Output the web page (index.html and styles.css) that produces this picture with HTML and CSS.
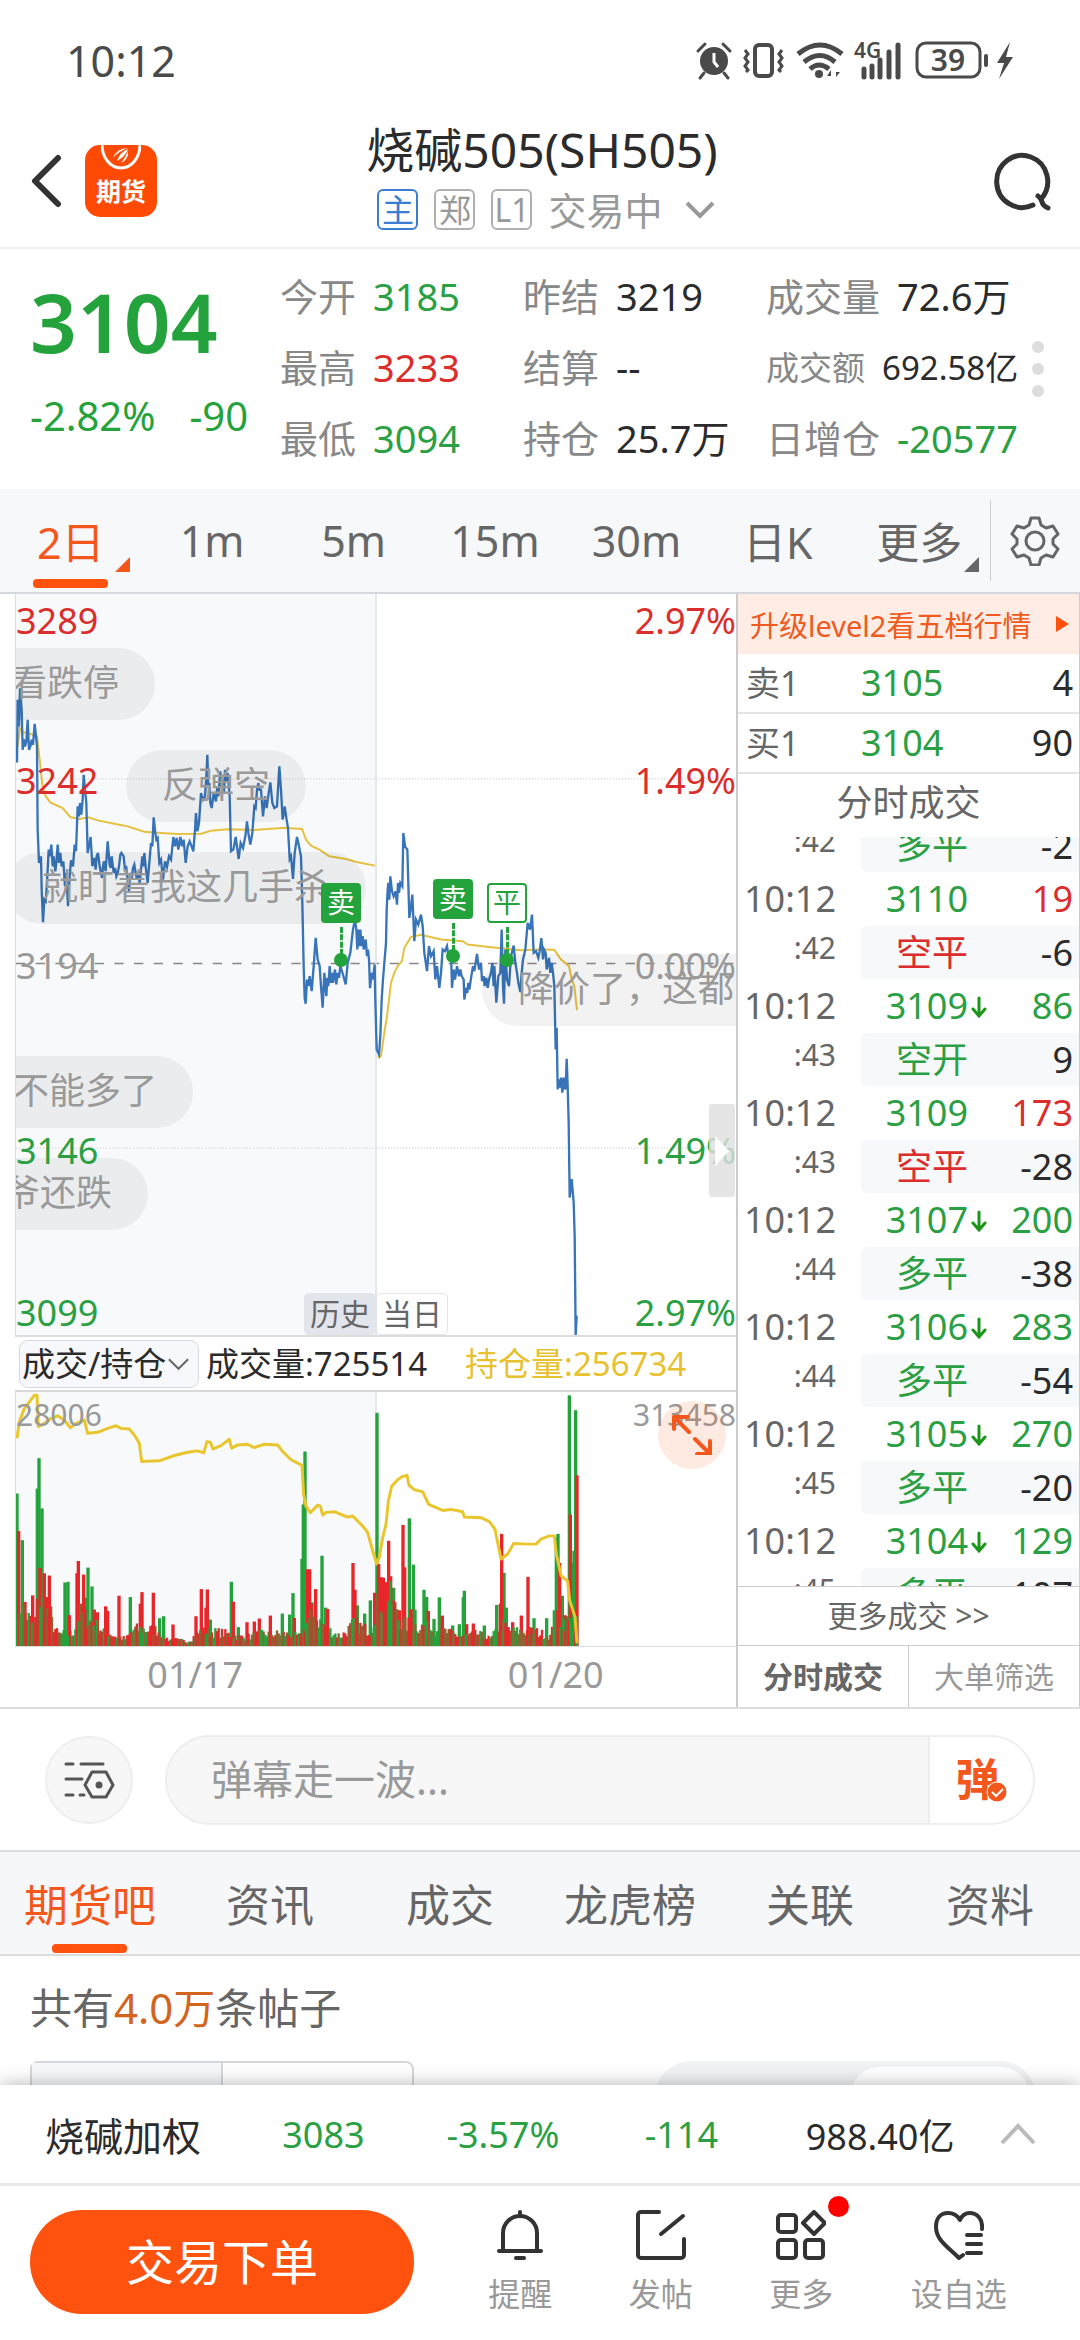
FILE: index.html
```html
<!DOCTYPE html>
<html lang="zh-CN">
<head>
  <meta charset="UTF-8" />
  <title>烧碱505(SH505)</title>
  <meta name="viewport" content="width=device-width, initial-scale=1" />
  <link rel="stylesheet" href="styles.css">
</head>
<body>
  <div class="app">
    <div class="status-bar">
      <span class="clock">10:12</span>
      <svg class="status-icons" viewBox="0 0 320 40" width="320" height="40" fill="none" stroke="#4a4a4a" stroke-width="3">
        <circle cx="18" cy="21" r="14" fill="#4a4a4a" stroke="none" />
        <path d="M2 11L9 4M34 11L27 4M8 33L4 38M28 33L32 38" stroke-linecap="round" />
        <path d="M18 13v9l4 5" stroke="#fff" />
        <rect x="59" y="5" width="17" height="31" rx="4" stroke-width="4" />
        <path d="M49 10l3 4-3 4 3 4-3 4 3 4-2 2M86 10l-3 4 3 4-3 4 3 4-3 4 2 2" />
        <path d="M102 14q22-18 44 0M108 22q16-13 31 0M114 29q9-8 19 0" stroke-width="5" />
        <circle cx="123" cy="34" r="4" fill="#4a4a4a" stroke="none" />
        <path d="M135 38v-8l-4 6h4M140 29v8l4-5h-4" fill="#4a4a4a" stroke="none" />
        <path d="M168 29v8M176 26v11M184 20v17M193 12v25M202 5v32" stroke-width="5" stroke-linecap="round" />
        <rect x="221" y="3" width="63" height="34" rx="9" />
        <path d="M290 16v9" stroke-width="4" stroke-linecap="round" />
        <path d="M314 2L301 23h7l-5 16 14-22h-7z" fill="#4a4a4a" stroke="none" />
        <text class="svg-4g" x="158" y="18">4G</text>
        <text class="svg-battery" x="252" y="31" text-anchor="middle">39</text>
      </svg>
    </div>

    <header class="header">
      <div class="header-left">
        <button class="icon-btn" aria-label="返回">
          <svg width="32" height="54" viewBox="0 0 32 54" fill="none" stroke="#333" stroke-width="6" stroke-linejoin="round" stroke-linecap="round"><path d="M28 4L5 27l23 23" /></svg>
        </button>
        <a class="logo" href="#">
          <svg width="40" height="27" viewBox="0 0 40 27" fill="none">
            <path d="M1 0a19 23 0 0 0 38 0" stroke="#fff" stroke-width="3" />
            <path d="M12 13Q16 3 27 3Q18 6 12 13ZM16 16Q19 7 27 4Q25 11 16 16ZM20 18Q24 13 27 6Q28 14 20 18Z" fill="#fff" />
          </svg>
          <span>期货</span>
        </a>
      </div>
      <div class="header-title">
        <h1>烧碱505(SH505)</h1>
        <div class="sub-title">
          <span class="badge badge-blue">主</span>
          <span class="badge">郑</span>
          <span class="badge">L1</span>
          <span>交易中</span>
          <svg class="sub-arrow" width="30" height="18" viewBox="0 0 30 18" fill="none" stroke="#999" stroke-width="4"><path d="M2 2l13 13L28 2" /></svg>
        </div>
      </div>
      <button class="icon-btn search" aria-label="搜索">
        <svg width="60" height="60" viewBox="0 0 60 60" fill="none" stroke="#333" stroke-width="5" stroke-linecap="round"><path d="M39 53A25.500 26 0 1 1 47 47" /><path d="M44 44q3 2 4 6 1 4 6 6" /></svg>
      </button>
    </header>

    <main class="content">
      <section class="quote">
        <div class="quote-main">
          <div class="price">3104</div>
          <div class="change"><span>-2.82%</span><span>-90</span></div>
        </div>
        <dl class="stats">
          <div><dt>今开</dt><dd class="green">3185</dd></div>
          <div><dt>昨结</dt><dd>3219</dd></div>
          <div><dt>成交量</dt><dd>72.6万</dd></div>
          <div><dt>最高</dt><dd class="red">3233</dd></div>
          <div><dt>结算</dt><dd>--</dd></div>
          <div class="stat-small"><dt>成交额</dt><dd>692.58亿</dd></div>
          <div><dt>最低</dt><dd class="green">3094</dd></div>
          <div><dt>持仓</dt><dd>25.7万</dd></div>
          <div><dt>日增仓</dt><dd class="green">-20577</dd></div>
        </dl>
        <div class="dots"><i></i><i></i><i></i></div>
      </section>

      <nav class="period">
        <button class="period-tab active has-more">2日</button>
        <button class="period-tab">1m</button>
        <button class="period-tab">5m</button>
        <button class="period-tab">15m</button>
        <button class="period-tab">30m</button>
        <button class="period-tab">日K</button>
        <button class="period-tab has-more">更多</button>
        <button class="gear" aria-label="设置">
          <svg width="50" height="50" viewBox="0 0 50 50" fill="none" stroke="#666" stroke-width="3" stroke-linejoin="round">
            <path d="M21 2h8l2 7 5 3 7-2 5 8-5 5v5l5 5-5 8-7-2-5 3-2 7h-8l-2-7-5-3-7 2-5-8 5-5v-5l-5-5 5-8 7 2 5-3z" />
            <circle cx="25" cy="25" r="9" />
          </svg>
        </button>
      </nav>

      <section class="market">
        <div class="charts">
          <div class="chart price-chart">
            <svg class="plot" viewBox="45 12 2160 2226" preserveAspectRatio="none" fill="none">
              <rect x="45" y="12" width="1079" height="2226" fill="#f7f9fb" />
              <path d="M45 567H2205M45 1677H2205" stroke="#ddd" stroke-width="4" stroke-dasharray="4 5" />
              <path d="M45 1122H2205" stroke="#888" stroke-width="5" stroke-dasharray="28 31" />
              <path d="M1125 12V2238" stroke="#e0e3e7" stroke-width="5" />
              <polyline class="avg-line" points="50,470 57,415 66,428 78,428 95,435 108,440 116,510 124,585 134,620 148,638 185,655 208,682 235,688 262,683 290,692 340,702 380,710 430,726 480,730 530,733 600,732 630,723 680,719 760,721 850,714 903,718 915,750 930,768 955,780 985,800 1030,807 1070,818 1122,828" />
              <polyline class="avg-line" points="1130,1405 1140,1400 1150,1330 1158,1280 1170,1180 1180,1150 1190,1130 1203,1115 1210,1075 1230,1042 1260,1036 1320,1050 1385,1055 1400,1065 1470,1073 1560,1082 1620,1080 1660,1081 1680,1110 1704,1130 1712,1170 1720,1190 1728,1262" />
              <polyline class="price-line" points="48,518 50,330 54,410 57,295 62,360 65,480 68,448 72,470 76,455 80,390 84,480 88,470 92,450 96,465 101,402 105,440 108,470 110,720 114,820 120,800 122,900 126,998 130,930 134,935 138,880 143,780 147,800 151,765 155,830 158,800 163,845 166,820 170,765 174,820 178,790 182,830 187,815 192,890 196,850 201,950 206,860 210,812 216,830 221,765 225,785 230,650 234,680 237,640 241,675 245,630 248,555 252,600 256,640 260,790 264,770 269,742 274,830 280,805 284,840 287,800 291,790 296,830 303,865 306,830 309,815 314,845 320,755 326,825 329,835 332,800 338,850 342,835 346,860 350,850 354,830 358,795 361,790 368,800 372,840 376,835 384,905 388,850 392,870 396,835 400,825 404,850 408,870 412,850 416,880 420,840 424,800 427,830 430,790 436,850 440,880 444,830 450,760 454,770 458,683 463,730 466,750 470,745 475,820 480,810 486,870 492,815 498,832 504,800 510,810 517,742 522,770 527,745 532,780 538,742 543,770 548,750 554,820 560,770 566,755 572,770 577,785 582,720 585,670 589,725 594,700 600,610 606,630 612,620 616,560 619,495 622,590 625,580 628,640 632,655 638,610 645,635 649,590 652,620 658,545 661,590 665,570 669,610 672,540 676,575 680,550 686,620 690,785 697,780 704,742 713,808 719,760 726,775 733,740 738,695 742,730 748,765 754,730 760,650 764,655 768,600 772,580 775,600 780,600 786,680 792,620 797,655 803,610 808,578 814,640 820,655 828,650 835,530 840,600 845,690 851,650 856,685 861,715 866,808 870,800 876,868 881,790 888,742 894,770 900,800 904,940 908,1130 911,1225 914,1243 918,1170 922,1190 926,1160 932,1205 938,1130 944,1045 950,1110 956,1130 960,1190 965,1255 970,1150 976,1220 979,1165 982,1190 986,1130 990,1180 993,1150 996,1180 1002,1140 1006,1185 1010,1150 1014,1165 1018,1130 1026,1155 1034,1185 1040,1120 1048,1090 1056,1020 1062,990 1066,1020 1069,1080 1072,1020 1075,1070 1078,1020 1082,1070 1085,1040 1088,1080 1094,1050 1098,1100 1101,1080 1104,1110 1107,1196 1112,1150 1116,1170 1121,1125 1123,1230 1127,1380 1134,1395 1138,1340 1142,1230 1146,1170 1150,1120 1155,1060 1157,960 1160,900 1162,880 1165,930 1168,860 1173,905 1178,920 1184,905 1188,945 1191,880 1194,910 1198,880 1204,890 1207,730 1212,770 1219,780 1225,985 1229,960 1234,915 1240,1055 1245,990 1252,1005 1260,975 1265,1010 1270,1090 1278,1145 1284,1070 1290,1100 1298,1085 1303,1170 1308,1130 1315,1195 1320,1150 1325,1080 1332,1085 1338,1070 1344,1110 1350,1090 1353,1195 1358,1140 1362,1170 1368,1130 1374,1160 1378,1140 1382,1160 1388,1170 1390,1230 1396,1195 1399,1210 1402,1180 1405,1200 1411,1160 1416,1130 1420,1145 1428,1093 1434,1140 1440,1120 1443,1175 1448,1160 1451,1190 1456,1165 1460,1195 1464,1170 1470,1150 1474,1120 1478,1190 1480,1130 1486,1240 1492,1160 1498,1150 1502,1020 1506,1190 1509,1243 1513,1080 1518,1170 1524,1190 1530,1100 1538,1068 1543,1120 1548,1150 1552,1180 1558,1208 1562,1150 1566,1110 1573,1080 1580,1000 1587,1020 1593,975 1598,1090 1605,1085 1612,1105 1616,1085 1621,1046 1626,1110 1629,1080 1634,1090 1637,1140 1644,1105 1648,1150 1652,1120 1656,1150 1660,1190 1664,1380 1667,1315 1670,1500 1674,1470 1677,1495 1680,1465 1684,1510 1688,1465 1692,1500 1694,1495 1697,1408 1700,1490 1703,1600 1706,1825 1712,1770 1718,1840 1721,1940 1724,2238 1727,2180" />
            </svg>
            <div class="bullets">
              <span class="bullet b1">看跌停</span>
              <span class="bullet b2">反弹空</span>
              <span class="bullet b3">就盯着我这几手杀</span>
              <span class="bullet b4">降价了，这都</span>
              <span class="bullet b5">不能多了</span>
              <span class="bullet b6">爷还跌</span>
            </div>
            <div class="scale">
              <div class="red"><span>3289</span><span>2.97%</span></div>
              <div class="red"><span>3242</span><span>1.49%</span></div>
              <div class="grey"><span>3194</span><span>0.00%</span></div>
              <div class="green"><span>3146</span><span>1.49%</span></div>
              <div class="green"><span>3099</span><span>2.97%</span></div>
            </div>
            <div class="marker m1"><b>卖</b><i></i><u></u></div>
            <div class="marker m2"><b>卖</b><i></i><u></u></div>
            <div class="marker outline m3"><b>平</b><i></i><u></u></div>
            <div class="days"><span>历史</span><span>当日</span></div>
            <button class="handle" aria-label="收起">
              <svg width="18" height="32" viewBox="0 0 18 32"><path d="M2 1l14 15L2 31z" fill="#fff" /></svg>
            </button>
          </div>

          <div class="volume-head">
            <label class="indicator">
              <select aria-label="指标"><option>成交/持仓</option></select>
              <svg width="24" height="14" viewBox="0 0 24 14" fill="none" stroke="#666" stroke-width="2"><path d="M2 2l10 10L22 2" /></svg>
            </label>
            <span class="vol">成交量:725514</span>
            <span class="yellow">持仓量:256734</span>
          </div>

          <div class="chart volume-chart">
            <svg class="plot" viewBox="45 60 2160 768" preserveAspectRatio="none" fill="none">
              <rect x="45" y="60" width="1079" height="768" fill="#f7f9fb" />
              <path d="M1125 60V828" stroke="#e0e3e7" stroke-width="5" />
              <g id="bars"></g>
              <polyline class="oi-line" points="48,200 55,150 70,110 85,90 100,70 108,70 112,165 130,155 150,140 170,132 190,145 208,168 225,155 250,145 260,185 290,182 320,170 345,162 360,170 385,172 400,190 415,215 422,270 475,268 520,252 560,242 590,238 608,244 618,210 628,212 636,232 660,222 685,203 692,230 710,220 740,218 760,228 790,218 830,220 845,240 870,265 903,282 908,370 915,405 928,425 950,402 958,405 965,432 975,424 1000,422 1040,438 1055,435 1085,465 1100,485 1115,540 1127,580 1135,560 1145,500 1155,460 1162,390 1172,345 1190,325 1205,315 1218,312 1224,342 1240,355 1265,362 1283,400 1325,418 1350,415 1385,422 1390,438 1440,440 1465,452 1482,475 1495,540 1500,565 1520,550 1538,518 1580,520 1605,520 1620,505 1645,495 1660,495 1666,550 1680,615 1700,632 1706,690 1722,740 1728,820" />
            </svg>
            <div class="scale volume-scale"><div class="grey"><span>28006</span><span>313458</span></div></div>
            <button class="expand" aria-label="全屏">
              <svg width="40" height="40" viewBox="0 0 40 40" fill="none" stroke="#f4571c" stroke-width="4" stroke-linecap="round" stroke-linejoin="round"><path d="M17 17L2 2M2 14V2h14M23 24l15 15M38 26v13H25" /></svg>
            </button>
          </div>
          <div class="dates"><span>01/17</span><span>01/20</span></div>
        </div>

        <aside class="book">
          <a class="upgrade" href="#">升级level2看五档行情
            <svg width="13" height="16" viewBox="0 0 13 16"><path d="M0 0l13 8L0 16z" fill="#ff520e" /></svg>
          </a>
          <table class="orders">
            <tr><td>卖1</td><td class="green">3105</td><td>4</td></tr>
            <tr><td>买1</td><td class="green">3104</td><td>90</td></tr>
          </table>
          <h2>分时成交</h2>
          <div class="ticks">
            <table>
              <tr class="sub"><td>:42</td><td class="green">多平</td><td>-2</td></tr>
              <tr><td>10:12</td><td class="green">3110</td><td class="red">19</td></tr>
              <tr class="sub"><td>:42</td><td class="red">空平</td><td>-6</td></tr>
              <tr><td>10:12</td><td class="green down">3109</td><td class="green">86</td></tr>
              <tr class="sub"><td>:43</td><td class="green">空开</td><td>9</td></tr>
              <tr><td>10:12</td><td class="green">3109</td><td class="red">173</td></tr>
              <tr class="sub"><td>:43</td><td class="red">空平</td><td>-28</td></tr>
              <tr><td>10:12</td><td class="green down">3107</td><td class="green">200</td></tr>
              <tr class="sub"><td>:44</td><td class="green">多平</td><td>-38</td></tr>
              <tr><td>10:12</td><td class="green down">3106</td><td class="green">283</td></tr>
              <tr class="sub"><td>:44</td><td class="green">多平</td><td>-54</td></tr>
              <tr><td>10:12</td><td class="green down">3105</td><td class="green">270</td></tr>
              <tr class="sub"><td>:45</td><td class="green">多平</td><td>-20</td></tr>
              <tr><td>10:12</td><td class="green down">3104</td><td class="green">129</td></tr>
              <tr class="sub"><td>:45</td><td class="green">多平</td><td>-107</td></tr>
            </table>
          </div>
          <a class="more-ticks" href="#">更多成交 &gt;&gt;</a>
          <div class="book-tabs">
            <button class="active">分时成交</button>
            <button>大单筛选</button>
          </div>
        </aside>
      </section>

      <section class="danmu">
        <button class="danmu-set" aria-label="弹幕设置">
          <svg width="52" height="40" viewBox="0 0 52 40" fill="none" stroke="#555" stroke-width="3" stroke-linecap="round" stroke-linejoin="round">
            <path d="M3 4h7M18 4h22M3 19h16M3 35h7M17 35h4" />
            <path d="M29 12h14l7 13-7 12H29l-7-12z" /><circle cx="36" cy="25" r="2" fill="#555" />
          </svg>
        </button>
        <div class="danmu-box">
          <input type="text" placeholder="弹幕走一波..." aria-label="弹幕">
          <button aria-label="弹幕开关">弹
            <svg width="22" height="22" viewBox="0 0 22 22"><circle cx="11" cy="11" r="10" fill="#f4571c" stroke="#fff" stroke-width="1" /><path d="M6 11l4 4 7-7" fill="none" stroke="#fff" stroke-width="2" /></svg>
          </button>
        </div>
      </section>

      <nav class="tabs">
        <button class="active">期货吧</button>
        <button>资讯</button>
        <button>成交</button>
        <button>龙虎榜</button>
        <button>关联</button>
        <button>资料</button>
      </nav>

      <section class="posts">
        <p>共有<em>4.0万</em>条帖子</p>
        <div class="filters">
          <div class="filter-box"><span></span><span></span></div>
          <div class="filter-pill"><span></span></div>
        </div>
      </section>
    </main>

    <footer class="footer">
      <div class="index-bar">
        <span class="index-name">烧碱加权</span>
        <span class="green">3083</span>
        <span class="green">-3.57%</span>
        <span class="green">-114</span>
        <span>988.40亿</span>
        <svg width="36" height="22" viewBox="0 0 36 22" fill="none" stroke="#bbb" stroke-width="4"><path d="M2 20L18 3l16 17" /></svg>
      </div>
      <div class="actions">
        <button class="trade">交易下单</button>
        <button class="action">
          <svg width="50" height="50" viewBox="0 0 50 50" fill="none" stroke="#333" stroke-width="4" stroke-linecap="round"><path d="M25 2v4M8 41V23a17 17 0 0 1 34 0v18M4 41h42M21 48h8" /></svg>
          <span>提醒</span>
        </button>
        <button class="action">
          <svg width="50" height="50" viewBox="0 0 50 50" fill="none" stroke="#333" stroke-width="4" stroke-linecap="round" stroke-linejoin="round"><path d="M23 2H5a3 3 0 0 0-3 3v40a3 3 0 0 0 3 3h40a3 3 0 0 0 3-3V29M25 24L47 6" /></svg>
          <span>发帖</span>
        </button>
        <button class="action">
          <svg width="50" height="50" viewBox="0 0 50 50" fill="none" stroke="#333" stroke-width="4" stroke-linejoin="round"><rect x="2" y="5" width="18" height="17" rx="3" /><rect x="2" y="30" width="18" height="18" rx="3" /><rect x="29" y="30" width="18" height="18" rx="3" /><path d="M38 2l11 11-11 11-11-11z" /></svg>
          <span>更多</span>
          <i class="red-dot"></i>
        </button>
        <button class="action wide">
          <svg width="50" height="50" viewBox="0 0 50 50" fill="none" stroke="#333" stroke-width="4" stroke-linecap="round" stroke-linejoin="round"><path d="M48 19C49 8 42 3 36 3Q29 3 26 10Q22 3 14 3C6 3 2 9 2 17C2 30 14 37 25 48L29 45M33 25h14M33 34h14M33 43h14" /></svg>
          <span>设自选</span>
        </button>
      </div>
    </footer>
  </div>

  <script>
    // small arrow after prices that ticked down
    document.querySelectorAll('.down').forEach((cell) => {
      cell.insertAdjacentHTML('beforeend', '<svg width="16" height="22" viewBox="0 0 16 22" fill="none" stroke="#1b961b" stroke-width="3" stroke-linecap="round"><path d="M8 2v18M2 13l6 7 6-7"/></svg>');
    });

    const floor = [[48, 650], [100, 750], [112, 640], [140, 700], [170, 780], [215, 780], [235, 700], [300, 760], [345, 790], [375, 800], [400, 760], [470, 765], [500, 800], [560, 810], [600, 770], [660, 775], [730, 795], [780, 780], [850, 780], [900, 790], [930, 700], [990, 770], [1020, 790], [1060, 740], [1110, 770], [1130, 640], [1170, 640], [1200, 740], [1260, 750], [1330, 770], [1380, 790], [1430, 780], [1470, 800], [1500, 740], [1530, 770], [1600, 770], [1650, 790], [1660, 720], [1690, 730], [1728, 740]];
    const greens = [[48, 367], [64, 508], [109, 352], [114, 260], [123, 412], [149, 708], [192, 636], [201, 634], [254, 682], [261, 591], [273, 648], [388, 680], [476, 744], [488, 738], [628, 748], [691, 634], [712, 771], [844, 730], [866, 733], [876, 668], [903, 565], [907, 400], [912, 240], [933, 696], [963, 555], [974, 712], [1069, 705], [1091, 730], [1108, 690], [1128, 123], [1178, 652], [1188, 717], [1225, 442], [1237, 582], [1242, 718], [1269, 658], [1277, 680], [1299, 746], [1315, 681], [1355, 766], [1375, 762], [1387, 680], [1390, 661], [1450, 766], [1487, 704], [1509, 607], [1516, 712], [1599, 744], [1637, 744], [1660, 720], [1666, 500], [1671, 489], [1684, 676], [1705, 70], [1715, 577], [1719, 540], [1724, 115]];
    const reds = [[53, 480], [72, 695], [95, 675], [117, 592], [130, 608], [136, 680], [145, 615], [205, 735], [228, 608], [232, 571], [238, 700], [248, 612], [280, 718], [289, 726], [314, 708], [320, 722], [354, 676], [418, 700], [423, 665], [457, 667], [516, 763], [585, 738], [601, 656], [615, 712], [619, 657], [697, 694], [738, 756], [760, 754], [775, 745], [808, 736], [880, 743], [920, 596], [926, 596], [944, 656], [980, 716], [1056, 577], [1062, 658], [1121, 667], [1133, 580], [1142, 620], [1147, 622], [1152, 635], [1158, 635], [1163, 510], [1169, 617], [1195, 720], [1206, 462], [1211, 590], [1230, 717], [1282, 722], [1324, 736], [1397, 762], [1417, 760], [1498, 700], [1502, 489], [1535, 756], [1561, 736], [1581, 619], [1676, 577], [1692, 735], [1708, 430], [1728, 312]];

    let svg = '';
    const bar = (x, y, color, w) => {
      svg += `<rect x="${x - w / 2}" y="${y}" width="${w}" height="${828 - y}" fill="${color}"/>`;
    };
    greens.forEach(([x, y]) => bar(x, y, '#24a23c', 10));
    reds.forEach(([x, y]) => bar(x, y, '#e8262a', 10));
    let seed = 7;
    let k = 0;
    for (let x = 48; x <= 1728; x += 5) {
      while (k < floor.length - 2 && floor[k + 1][0] < x) k++;
      const [x0, y0] = floor[k];
      const [x1, y1] = floor[k + 1];
      const top = y0 + (y1 - y0) * (x - x0) / (x1 - x0);
      seed = (seed * 16807) % 2147483647;
      const r = seed / 2147483647;
      const color = ['#24a23c', '#e8262a', '#8a6430', '#c43a2c'][Math.floor(r * 97) % 4];
      bar(x, Math.round(828 - (828 - top) * (0.45 + r * 0.6)), color, 7);
    }
    document.getElementById('bars').innerHTML = svg;
  </script>
</body>
</html>
```

FILE: styles.css
```css
* {
  box-sizing: border-box;
}
body {
  margin: 0;
  font-family: "Noto Sans", "Noto Sans CJK SC", sans-serif;
  font-size: 36px;
  color: #2b2b2b;
  background: #fff;
}
button,
input,
select {
  font: inherit;
  color: inherit;
  border: none;
  background: none;
  padding: 0;
  margin: 0;
}
button {
  cursor: pointer;
}
a {
  color: inherit;
  text-decoration: none;
}
svg {
  display: block;
}
h1, h2, p, dl, dd {
  margin: 0;
  font-weight: 400;
}
table {
  width: 100%;
  border-collapse: separate;
  border-spacing: 0;
  table-layout: fixed;
}
td {
  padding: 0;
}
.green { color: #2b9f43; }
.red { color: #dc2d2d; }
.grey { color: #999; }
.yellow { color: #e8c12e; }

.app {
  display: flex;
  flex-direction: column;
  height: 100vh;
}
.content {
  flex: 1;
  min-height: 0;
  overflow: hidden;
}

/* status bar */
.status-bar {
  display: flex;
  justify-content: space-between;
  align-items: center;
  height: 120px;
  padding: 0 64px 0 66px;
  color: #4a4a4a;
}
.clock {
  font-size: 43px;
}
.status-icons {
  overflow: visible;
}
.svg-4g {
  font-size: 21px;
  font-weight: 600;
  fill: #4a4a4a;
  stroke: none;
}
.svg-battery {
  font-size: 30px;
  font-weight: 600;
  fill: #4a4a4a;
  stroke: none;
}

/* header */
.header {
  display: grid;
  grid-template-columns: 1fr auto 1fr;
  align-items: center;
  height: 129px;
  padding: 0 26px 0 30px;
  border-bottom: 2px solid #eee;
}
.header-left {
  display: flex;
  align-items: center;
  gap: 23px;
  padding-bottom: 5px;
}
.logo {
  display: flex;
  flex-direction: column;
  align-items: center;
  width: 72px;
  height: 72px;
  border-radius: 15px;
  background: #ff4a05;
  color: #fff;
  font-size: 25px;
  font-weight: 700;
  line-height: 38px;
}
.header-title {
  align-self: start;
  text-align: center;
}
.header-title h1 {
  font-size: 48px;
  line-height: 60px;
}
.sub-title {
  display: flex;
  justify-content: center;
  align-items: center;
  gap: 16px;
  margin-top: 9px;
  padding-left: 8px;
  font-size: 38px;
  line-height: 40px;
  color: #999;
}
.badge {
  width: 41px;
  height: 41px;
  border: 2px solid #b0b0b0;
  border-radius: 6px;
  font-size: 32px;
  line-height: 37px;
}
.badge-blue {
  color: #3b7dd0;
  border-color: #3b7dd0;
}
.sub-arrow {
  margin-left: 6px;
}
.search {
  justify-self: end;
  padding-bottom: 4px;
}

/* quote */
.quote {
  display: flex;
  height: 240px;
  padding: 12px 30px 0;
}
.quote-main {
  width: 250px;
  color: #24a23c;
}
.price {
  margin-top: 10px;
  font-size: 82px;
  font-weight: 600;
  line-height: 100px;
}
.change {
  display: flex;
  gap: 34px;
  margin-top: 20px;
  font-size: 40px;
  line-height: 50px;
  white-space: nowrap;
}
.stats {
  flex: 1;
  display: grid;
  grid-template-columns: 243fr 243fr 266fr;
  grid-auto-rows: 71px;
  font-size: 38px;
  line-height: 71px;
  white-space: nowrap;
}
.stats div {
  display: flex;
  gap: 17px;
}
.stats dt {
  color: #888;
}
.stats .stat-small {
  font-size: 33px;
}
.dots {
  display: flex;
  flex-direction: column;
  gap: 10px;
  margin: 80px 6px 0 0;
}
.dots i {
  width: 12px;
  height: 12px;
  border-radius: 50%;
  background: #ddd;
}

/* period tabs */
.period {
  display: flex;
  align-items: center;
  height: 105px;
  background: #f7f8fa;
  border-bottom: 2px solid #d4d7db;
}
.period-tab {
  position: relative;
  flex: 1;
  height: 100%;
  font-size: 43px;
  color: #666;
  white-space: nowrap;
}
.period-tab.active {
  color: #f4571c;
}
.period-tab.active::after,
.tabs .active::after {
  content: "";
  position: absolute;
  left: 50%;
  bottom: 4px;
  width: 75px;
  height: 9px;
  margin-left: -38px;
  border-radius: 4px;
  background: #ff520e;
}
.has-more::before {
  content: "";
  position: absolute;
  right: 11px;
  bottom: 20px;
  border-left: 15px solid transparent;
  border-bottom: 15px solid currentColor;
}
.gear {
  display: flex;
  justify-content: center;
  align-items: center;
  width: 90px;
  height: 81px;
  border-left: 1px solid #ccc;
}

/* charts */
.market {
  display: flex;
  border-bottom: 2px solid #ddd;
}
.charts {
  flex: 1;
  min-width: 0;
  padding-left: 15px;
}
.chart {
  position: relative;
  overflow: hidden;
  border-left: 1px solid #d8dbe0;
}
.price-chart {
  height: 743px;
  border-bottom: 2px solid #ddd;
}
.plot {
  width: 100%;
  height: 100%;
}
.avg-line {
  stroke: #e6c040;
  stroke-width: 6;
}
.price-line {
  stroke: #3874b9;
  stroke-width: 7;
}
.oi-line {
  stroke: #e9c62e;
  stroke-width: 9;
  stroke-linejoin: round;
}
.scale {
  position: absolute;
  inset: 0;
  line-height: 38px;
}
.scale div {
  position: absolute;
  top: 8px;
  left: 0;
  right: 0;
  display: flex;
  justify-content: space-between;
}
.scale div:nth-child(2) { top: 168px; }
.scale div:nth-child(3) { top: 353px; }
.scale div:nth-child(4) { top: 538px; }
.scale div:nth-child(5) { top: 700px; }
.bullet {
  position: absolute;
  height: 72px;
  padding: 0 36px;
  border-radius: 36px;
  background: rgba(0, 0, 0, 0.05);
  color: #999;
  line-height: 70px;
  white-space: nowrap;
}
.b1 { top: 54px; left: -41px; }
.b2 { top: 156px; left: 110px; }
.b3 { top: 258px; left: -10px; }
.b4 { top: 360px; left: 466px; }
.b5 { top: 462px; left: -39px; }
.b6 { top: 564px; left: -48px; }
.marker {
  position: absolute;
  display: flex;
  flex-direction: column;
  align-items: center;
}
.m1 { left: 305px; top: 289px; }
.m2 { left: 417px; top: 285px; }
.m3 { left: 471px; top: 289px; }
.marker b {
  width: 40px;
  height: 40px;
  border: 2px solid #24a23c;
  border-radius: 4px;
  background: #24a23c;
  color: #fff;
  font-size: 28px;
  font-weight: 400;
  line-height: 34px;
  text-align: center;
}
.marker.outline b {
  background: #fff;
  color: #24a23c;
}
.marker i {
  height: 28px;
  margin-top: 4px;
  border-left: 3px dashed #24a23c;
}
.marker u {
  width: 14px;
  height: 14px;
  margin-top: -2px;
  border-radius: 50%;
  background: #24a23c;
}
.days {
  position: absolute;
  left: 0;
  right: 0;
  bottom: 0;
  display: flex;
  justify-content: center;
  font-size: 30px;
  line-height: 40px;
  color: #666;
}
.days span {
  width: 72px;
  border: 1px solid #e2e5ec;
  border-radius: 5px;
  background: #fff;
  text-align: center;
}
.days span:first-child {
  background: #e2e5ec;
}
.handle {
  position: absolute;
  right: 1px;
  top: 510px;
  display: flex;
  justify-content: center;
  align-items: center;
  width: 26px;
  height: 93px;
  border-radius: 3px;
  background: rgba(222, 222, 222, 0.8);
}
.volume-head {
  display: flex;
  align-items: center;
  height: 53px;
  padding-left: 4px;
  font-size: 33px;
  line-height: 44px;
  white-space: nowrap;
}
.indicator {
  display: flex;
  align-items: center;
  width: 180px;
  height: 48px;
  padding: 0 8px 0 2px;
  border: 1px solid #d5d8de;
  border-radius: 9px;
  background: #f7f8fb;
}
.indicator select {
  flex: 1;
  width: 145px;
  height: 44px;
  appearance: none;
}
.vol {
  margin: 0 38px 0 7px;
}
.volume-chart {
  height: 257px;
  border-top: 2px solid #d8d8d8;
  border-bottom: 1px solid #ddd;
}
.volume-scale {
  font-size: 30px;
}
.volume-scale div {
  top: 4px;
}
.expand {
  position: absolute;
  top: 9px;
  right: 10px;
  display: flex;
  justify-content: center;
  align-items: center;
  width: 68px;
  height: 68px;
  border-radius: 50%;
  background: rgba(255, 82, 14, 0.12);
}
.dates {
  display: flex;
  height: 60px;
  line-height: 56px;
  color: #999;
}
.dates span {
  flex: 1;
  text-align: center;
}

/* order book */
.book {
  display: flex;
  flex-direction: column;
  width: 344px;
  border: solid #ccc;
  border-width: 0 1px 0 2px;
}
.upgrade {
  display: flex;
  justify-content: space-between;
  align-items: center;
  height: 60px;
  padding: 0 10px 0 12px;
  background: #ffece4;
  color: #ee5a20;
  font-size: 29px;
  white-space: nowrap;
}
.orders td {
  height: 60px;
  border-bottom: 2px solid #e4e4e4;
  line-height: 52px;
}
.orders td:first-child {
  width: 123px;
  padding-left: 8px;
  color: #666;
  font-size: 34px;
}
.orders td:last-child,
.ticks td:last-child {
  padding-right: 6px;
  text-align: right;
}
.book h2 {
  height: 63px;
  color: #666;
  font-size: 36px;
  line-height: 58px;
  text-align: center;
}
.ticks {
  height: 749px;
  overflow: hidden;
}
.ticks table {
  margin-top: -18px;
}
.ticks td {
  height: 54px;
  line-height: 52px;
}
.ticks td:first-child {
  width: 123px;
  padding-right: 25px;
  color: #666;
  text-align: right;
}
.ticks td:nth-child(2) {
  width: 127px;
  padding-right: 20px;
  text-align: right;
}
.ticks td svg {
  float: right;
  margin: 16px -19px 0 0;
}
.ticks .sub td {
  height: 53px;
  background: #f7f8fa;
}
.ticks .sub td:first-child {
  background: none;
  font-size: 30px;
  line-height: 44px;
  vertical-align: top;
}
.ticks .sub td:nth-child(2) {
  border-radius: 6px 0 0 6px;
}
.more-ticks {
  height: 60px;
  border: solid #ccc;
  border-width: 1px 0;
  color: #666;
  font-size: 30px;
  line-height: 58px;
  text-align: center;
}
.book-tabs {
  display: flex;
  height: 61px;
  font-size: 30px;
  color: #999;
}
.book-tabs button {
  flex: 1;
  padding-bottom: 4px;
}
.book-tabs .active {
  border-right: 1px solid #ccc;
  color: #666;
  font-weight: 700;
}

/* danmu */
.danmu {
  display: flex;
  align-items: center;
  gap: 32px;
  height: 143px;
  padding: 0 45px;
  border-bottom: 2px solid #ddd;
}
.danmu-set {
  display: flex;
  justify-content: center;
  align-items: center;
  width: 88px;
  height: 88px;
  border: 2px solid #eee;
  border-radius: 50%;
  background: #f7f7f7;
}
.danmu-box {
  flex: 1;
  display: flex;
  height: 90px;
  border: 2px solid #eee;
  border-radius: 45px;
  background: #f7f7f7;
  overflow: hidden;
}
.danmu-box input {
  flex: 1;
  min-width: 0;
  padding: 0 0 2px 44px;
  font-size: 41px;
}
.danmu-box input::placeholder {
  color: #999;
}
.danmu-box button {
  position: relative;
  width: 105px;
  padding: 0 8px 6px 0;
  border-left: 2px solid #eee;
  background: #fff;
  color: #f4571c;
  font-size: 44px;
  font-weight: 700;
}
.danmu-box button svg {
  position: absolute;
  right: 25px;
  bottom: 20px;
}

/* forum tabs */
.tabs {
  display: flex;
  height: 104px;
  background: #f6f7f9;
  border-bottom: 2px solid #ddd;
}
.tabs button {
  position: relative;
  flex: 1;
  font-size: 44px;
  color: #666;
}
.tabs .active {
  color: #f4571c;
}
.tabs .active::after {
  bottom: 1px;
}
.posts {
  padding: 22px 30px 0;
  color: #666;
  font-size: 42px;
  line-height: 60px;
}
.posts em {
  color: #d2641e;
  font-style: normal;
}
.filters {
  display: flex;
  justify-content: space-between;
  margin-top: 23px;
}
.filter-box {
  display: flex;
  width: 384px;
  height: 72px;
  border: 2px solid #d4d6da;
  border-radius: 8px;
}
.filter-box span {
  flex: 1;
}
.filter-box span:first-child {
  background: #f6f7fa;
  border-right: 2px solid #d4d6da;
}
.filter-pill {
  width: 381px;
  height: 72px;
  margin-right: 14px;
  padding: 6px;
  border-radius: 36px;
  background: #f1f2f4;
}
.filter-pill span {
  display: block;
  width: 180px;
  height: 60px;
  margin-left: auto;
  border-radius: 30px;
  background: #fff;
}

/* footer */
.footer {
  position: relative;
  background: #fff;
  box-shadow: 0 0 18px rgba(0, 0, 0, 0.3);
}
.index-bar {
  display: grid;
  grid-template-columns: 237fr 164fr 198fr 161fr 194fr 36px;
  align-items: center;
  height: 101px;
  padding: 0 44px 0 45px;
  border-bottom: 3px solid #eaeaea;
  white-space: nowrap;
}
.index-name {
  font-size: 39px;
}
.actions {
  display: flex;
  align-items: center;
  height: 154px;
  padding: 0 34px 0 30px;
}
.trade {
  width: 384px;
  height: 104px;
  margin: 0 36px 2px 0;
  padding-bottom: 6px;
  border-radius: 52px;
  background: #ff520e;
  color: #fff;
  font-size: 48px;
}
.action {
  position: relative;
  flex: 140;
  display: flex;
  flex-direction: column;
  align-items: center;
  gap: 12px;
  font-size: 32px;
  line-height: 44px;
  color: #999;
}
.action.wide {
  flex: 174;
}
.red-dot {
  position: absolute;
  top: -14px;
  right: 22px;
  width: 21px;
  height: 21px;
  border-radius: 50%;
  background: #f00;
}
```
